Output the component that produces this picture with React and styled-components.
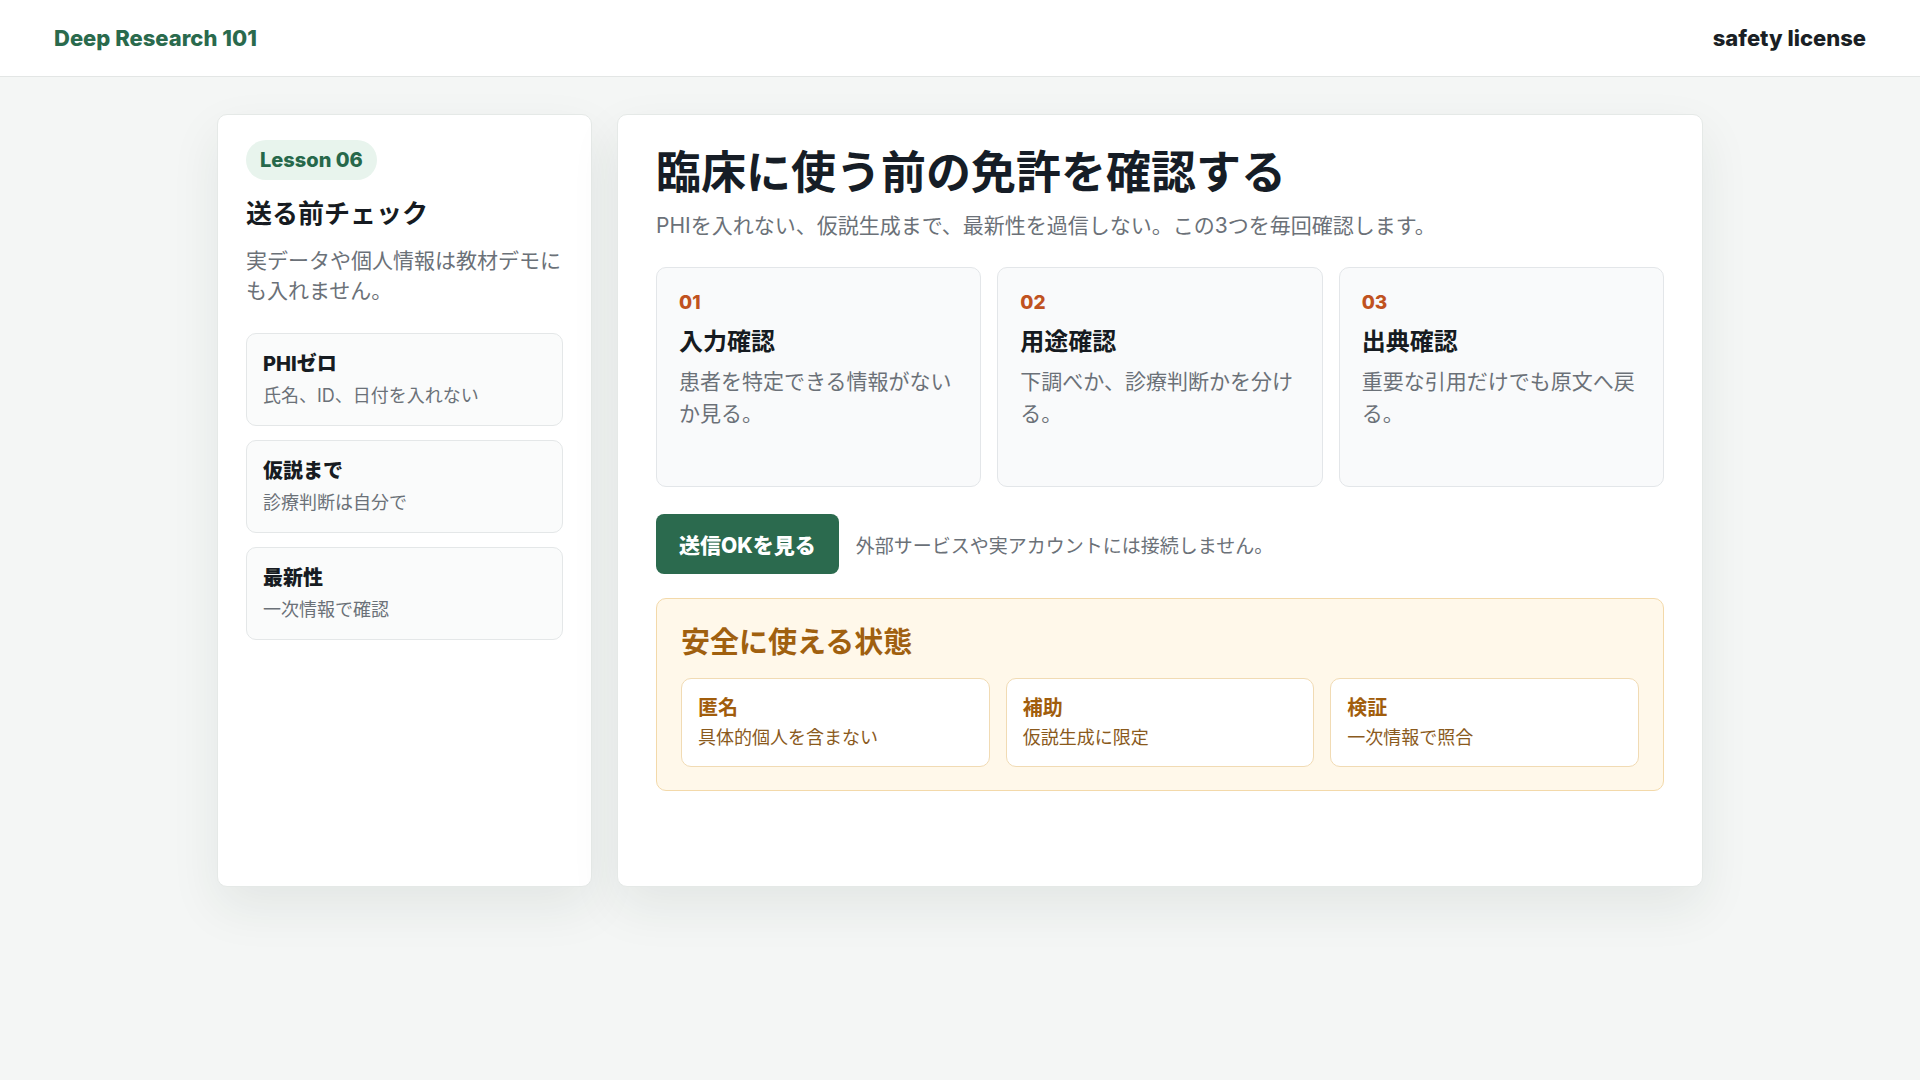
import styled, { createGlobalStyle } from "styled-components";

const GlobalStyle = createGlobalStyle`
  * {
    box-sizing: border-box;
  }
  body {
    margin: 0;
    background: #f4f6f5;
    font-family: Inter, "Noto Sans CJK JP", sans-serif;
    color: #171d24;
  }
`;

const checks = [
  { title: "PHIゼロ", sub: "氏名、ID、日付を入れない" },
  { title: "仮説まで", sub: "診療判断は自分で" },
  { title: "最新性", sub: "一次情報で確認" },
];

const steps = [
  { no: "01", title: "入力確認", desc: "患者を特定できる情報がないか見る。" },
  { no: "02", title: "用途確認", desc: "下調べか、診療判断かを分ける。" },
  { no: "03", title: "出典確認", desc: "重要な引用だけでも原文へ戻る。" },
];

const safeItems = [
  { title: "匿名", sub: "具体的個人を含まない" },
  { title: "補助", sub: "仮説生成に限定" },
  { title: "検証", sub: "一次情報で照合" },
];

export default function App() {
  return (
    <>
      <GlobalStyle />
      <Header>
        <Brand>Deep Research 101</Brand>
        <HeaderTag>safety license</HeaderTag>
      </Header>
      <Main>
        <SideCard>
          <LessonPill>Lesson 06</LessonPill>
          <SideTitle>送る前チェック</SideTitle>
          <SideDesc>実データや個人情報は教材デモにも入れません。</SideDesc>
          <CheckList>
            {checks.map((item) => (
              <CheckItem key={item.title}>
                <CheckTitle>{item.title}</CheckTitle>
                <CheckSub>{item.sub}</CheckSub>
              </CheckItem>
            ))}
          </CheckList>
        </SideCard>

        <MainCard>
          <Heading>臨床に使う前の免許を確認する</Heading>
          <Lead>
            PHIを入れない、仮説生成まで、最新性を過信しない。この3つを毎回確認します。
          </Lead>
          <StepGrid>
            {steps.map((step) => (
              <StepCard key={step.no}>
                <StepNo>{step.no}</StepNo>
                <StepTitle>{step.title}</StepTitle>
                <StepDesc>{step.desc}</StepDesc>
              </StepCard>
            ))}
          </StepGrid>
          <ActionRow>
            <PrimaryButton type="button">送信OKを見る</PrimaryButton>
            <ActionNote>外部サービスや実アカウントには接続しません。</ActionNote>
          </ActionRow>
          <SafeBox>
            <SafeTitle>安全に使える状態</SafeTitle>
            <SafeGrid>
              {safeItems.map((item) => (
                <SafeItem key={item.title}>
                  <SafeItemTitle>{item.title}</SafeItemTitle>
                  <SafeItemSub>{item.sub}</SafeItemSub>
                </SafeItem>
              ))}
            </SafeGrid>
          </SafeBox>
        </MainCard>
      </Main>
    </>
  );
}

const Header = styled.header`
  height: 77px;
  display: flex;
  align-items: center;
  justify-content: space-between;
  padding: 0 54px 1px;
  background: #ffffff;
  border-bottom: 1px solid #e3e6e5;
`;

const Brand = styled.div`
  font-size: 22px;
  font-weight: 800;
  color: #2a6a4d;
`;

const HeaderTag = styled.div`
  font-size: 22px;
  font-weight: 800;
  color: #1a1f25;
`;

const Main = styled.main`
  display: grid;
  grid-template-columns: 375px 1086px;
  justify-content: center;
  gap: 25px;
  padding: 37px 0 60px;
`;

const Card = styled.section`
  height: 773px;
  background: #ffffff;
  border: 1px solid #e5e9e7;
  border-radius: 10px;
  box-shadow: 0 20px 50px rgba(30, 50, 40, 0.08);
`;

const SideCard = styled(Card)`
  padding: 25px 28px;
`;

const LessonPill = styled.span`
  display: inline-block;
  height: 40px;
  line-height: 40px;
  padding: 0 14px;
  border-radius: 20px;
  background: #e8f4ed;
  color: #26684a;
  font-size: 20px;
  font-weight: 800;
`;

const SideTitle = styled.h2`
  margin: 16px 0 0;
  font-size: 26px;
  line-height: 35px;
  font-weight: 700;
  color: #161b21;
`;

const SideDesc = styled.p`
  margin: 15px 0 0;
  font-size: 21px;
  line-height: 30px;
  color: #6b7178;
`;

const CheckList = styled.div`
  display: flex;
  flex-direction: column;
  gap: 14px;
  margin-top: 27px;
`;

const CheckItem = styled.div`
  padding: 16px 16px;
  background: #fafbfb;
  border: 1px solid #e4e7e8;
  border-radius: 10px;
`;

const CheckTitle = styled.div`
  font-size: 20px;
  line-height: 28px;
  font-weight: 800;
  color: #171c22;
`;

const CheckSub = styled.div`
  margin-top: 5px;
  font-size: 18px;
  line-height: 26px;
  color: #6b7178;
`;

const MainCard = styled(Card)`
  padding: 30px 38px 0;
`;

const Heading = styled.h1`
  margin: 0;
  font-size: 45px;
  line-height: 56px;
  font-weight: 700;
  color: #161d26;
`;

const Lead = styled.p`
  margin: 8px 0 0;
  font-size: 21px;
  line-height: 34px;
  color: #6b7178;
`;

const StepGrid = styled.div`
  display: grid;
  grid-template-columns: repeat(3, 1fr);
  gap: 16px;
  margin-top: 24px;
`;

const StepCard = styled.div`
  min-height: 220px;
  padding: 21px 22px;
  background: #f9fafb;
  border: 1px solid #e3e6e9;
  border-radius: 10px;
`;

const StepNo = styled.div`
  font-size: 19px;
  line-height: 28px;
  font-weight: 800;
  color: #c0521f;
`;

const StepTitle = styled.div`
  margin-top: 8px;
  font-size: 24px;
  line-height: 34px;
  font-weight: 700;
  color: #161b21;
`;

const StepDesc = styled.div`
  margin-top: 7px;
  font-size: 21px;
  line-height: 31.5px;
  color: #6b7178;
`;

const ActionRow = styled.div`
  display: flex;
  align-items: center;
  gap: 17px;
  margin-top: 27px;
`;

const PrimaryButton = styled.button`
  height: 60px;
  padding: 0 23px;
  border: 0;
  border-radius: 8px;
  background: #2b6a4e;
  color: #ffffff;
  font-family: inherit;
  font-size: 21px;
  font-weight: 800;
  cursor: pointer;
`;

const ActionNote = styled.span`
  font-size: 19px;
  color: #6b7178;
`;

const SafeBox = styled.div`
  margin-top: 24px;
  padding: 23px 24px;
  background: #fff8ea;
  border: 1px solid #f3d9aa;
  border-radius: 10px;
`;

const SafeTitle = styled.h3`
  margin: 0;
  font-size: 29px;
  line-height: 42px;
  font-weight: 700;
  color: #a0600f;
`;

const SafeGrid = styled.div`
  display: grid;
  grid-template-columns: repeat(3, 1fr);
  gap: 16px;
  margin-top: 14px;
`;

const SafeItem = styled.div`
  padding: 15px 16px;
  background: #ffffff;
  border: 1px solid #f1dbb4;
  border-radius: 10px;
`;

const SafeItemTitle = styled.div`
  font-size: 20px;
  line-height: 28px;
  font-weight: 700;
  color: #a15d0c;
`;

const SafeItemSub = styled.div`
  margin-top: 3px;
  font-size: 18px;
  line-height: 26px;
  color: #8a5a1d;
`;
